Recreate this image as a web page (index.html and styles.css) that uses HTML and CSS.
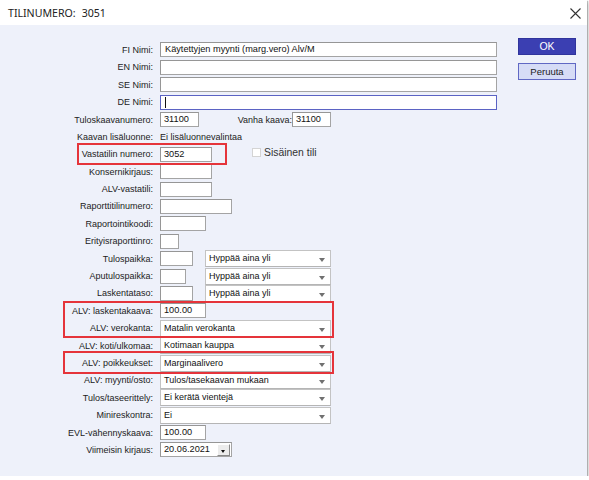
FILE: index.html
```html
<!DOCTYPE html>
<html lang="fi">
<head>
<meta charset="utf-8">
<title>TILINUMERO: 3051</title>
<link rel="stylesheet" href="styles.css">
</head>
<body>
<div class="window">
  <div class="titlebar">
    <div class="title"><span>TILINUMERO:</span><span class="title-num">3051</span></div>
    <svg class="close" width="11" height="11" viewBox="0 0 11 11"><path d="M0.5 0.5 L10.5 10.5 M10.5 0.5 L0.5 10.5" stroke="#333" stroke-width="1.1" fill="none"/></svg>
  </div>
  <div class="content">
    <div class="form">
      <div class="lbl">FI Nimi:</div>
      <div class="ctl"><div class="field full">Käytettyjen myynti (marg.vero) Alv/M</div></div>

      <div class="lbl">EN Nimi:</div>
      <div class="ctl"><div class="field full"></div></div>

      <div class="lbl">SE Nimi:</div>
      <div class="ctl"><div class="field full"></div></div>

      <div class="lbl">DE Nimi:</div>
      <div class="ctl"><div class="field full focus"><span class="caret"></span></div></div>

      <div class="lbl">Tuloskaavanumero:</div>
      <div class="ctl">
        <div class="field w39">31100</div>
        <div class="inline-lbl">Vanha kaava:</div>
        <div class="field w39">31100</div>
      </div>

      <div class="lbl">Kaavan lisäluonne:</div>
      <div class="ctl"><span class="plain">Ei lisäluonnevalintaa</span></div>

      <div class="lbl">Vastatilin numero:</div>
      <div class="ctl">
        <div class="field w52">3052</div>
        <div class="check"><span class="box"></span><span class="check-text">Sisäinen tili</span></div>
      </div>

      <div class="lbl">Konsernikirjaus:</div>
      <div class="ctl"><div class="field w52"></div></div>

      <div class="lbl">ALV-vastatili:</div>
      <div class="ctl"><div class="field w52"></div></div>

      <div class="lbl">Raporttitilinumero:</div>
      <div class="ctl"><div class="field w72"></div></div>

      <div class="lbl">Raportointikoodi:</div>
      <div class="ctl"><div class="field w46"></div></div>

      <div class="lbl">Erityisraporttinro:</div>
      <div class="ctl"><div class="field w19"></div></div>

      <div class="lbl">Tulospaikka:</div>
      <div class="ctl pair">
        <div class="field w33"></div>
        <div class="select">Hyppää aina yli</div>
      </div>

      <div class="lbl">Aputulospaikka:</div>
      <div class="ctl pair">
        <div class="field w26"></div>
        <div class="select">Hyppää aina yli</div>
      </div>

      <div class="lbl">Laskentataso:</div>
      <div class="ctl pair">
        <div class="field w33"></div>
        <div class="select">Hyppää aina yli</div>
      </div>

      <div class="lbl">ALV: laskentakaava:</div>
      <div class="ctl"><div class="field w46">100.00</div></div>

      <div class="lbl">ALV: verokanta:</div>
      <div class="ctl"><div class="select wide">Matalin verokanta</div></div>

      <div class="lbl">ALV: koti/ulkomaa:</div>
      <div class="ctl"><div class="select wide">Kotimaan kauppa</div></div>

      <div class="lbl">ALV: poikkeukset:</div>
      <div class="ctl"><div class="select wide">Marginaalivero</div></div>

      <div class="lbl">ALV: myynti/osto:</div>
      <div class="ctl"><div class="select wide">Tulos/tasekaavan mukaan</div></div>

      <div class="lbl">Tulos/taseerittely:</div>
      <div class="ctl"><div class="select wide">Ei kerätä vientejä</div></div>

      <div class="lbl">Minireskontra:</div>
      <div class="ctl"><div class="select wide">Ei</div></div>

      <div class="lbl">EVL-vähennyskaava:</div>
      <div class="ctl"><div class="field w46">100.00</div></div>

      <div class="lbl">Viimeisin kirjaus:</div>
      <div class="ctl">
        <div class="field date"><span>20.06.2021</span><span class="dd"></span></div>
      </div>
    </div>

    <div class="buttons">
      <div class="btn ok">OK</div>
      <div class="btn cancel">Peruuta</div>
    </div>

    <div class="mark mark-1"></div>
    <div class="mark mark-2"></div>
    <div class="mark mark-3"></div>
  </div>
</div>
</body>
</html>
```

FILE: styles.css
```css
* { box-sizing: border-box; }

html, body {
  margin: 0;
  background: #ffffff;
}

body {
  font-family: "Liberation Sans", Arial, sans-serif;
  color: #222;
}

.window {
  width: 587px;
  height: 476px;
  display: flex;
  flex-direction: column;
  background: #eef1fa;
  box-shadow: 1px 1px 1px rgba(0, 0, 0, 0.22), 2px 2px 4px rgba(0, 0, 0, 0.16);
}

.titlebar {
  height: 25px;
  flex: none;
  background: #ffffff;
  display: flex;
  align-items: center;
  justify-content: space-between;
  padding: 0 6px 0 8px;
}

.title {
  font-family: "Noto Sans", "Open Sans", sans-serif;
  font-size: 10.6px;
  color: #222;
  display: flex;
}

.title-num {
  margin-left: 6px;
}

.close {
  display: block;
  margin-top: 1px;
}

.content {
  flex: 1;
  position: relative;
  display: flex;
  align-items: flex-start;
  padding-top: 12.7px;
}

.form {
  margin-top: 3.6px;
  display: grid;
  grid-template-columns: 153px 337px;
  column-gap: 7px;
  grid-auto-rows: 17.4px;
  align-items: center;
  font-size: 9px;
  color: #222;
}

.lbl {
  text-align: right;
  white-space: nowrap;
  line-height: 12px;
}

.ctl {
  display: flex;
  align-items: center;
  height: 100%;
}

.field {
  height: 15px;
  background: #ffffff;
  border: 1px solid #a4a4a4;
  border-top-color: #969696;
  border-left-color: #969696;
  padding: 0 3px;
  line-height: 13px;
  font-size: 9.2px;
  white-space: nowrap;
  overflow: hidden;
  color: #111;
}

.field.full { width: 337px; padding-left: 4px; }
.field.focus {
  border-color: #5b63c4;
  display: flex;
  align-items: center;
}
.caret {
  width: 1px;
  height: 11px;
  background: #111;
}

.w19 { width: 19px; }
.w26 { width: 26px; }
.w33 { width: 33px; }
.w39 { width: 39px; }
.w46 { width: 46px; }
.w52 { width: 52px; }
.w72 { width: 72px; }

.inline-lbl {
  width: 93px;
  text-align: right;
  white-space: nowrap;
}

.plain {
  white-space: nowrap;
}

.check {
  display: flex;
  align-items: center;
  margin-left: 40px;
  margin-bottom: 4px;
}

.check .box {
  width: 9px;
  height: 9px;
  background: #ffffff;
  border: 1px solid #d4d4d4;
}

.check-text {
  margin-left: 3px;
  font-size: 10.4px;
  color: #333;
}

.pair {
  display: grid;
  grid-template-columns: 45px 126px;
  align-items: center;
}

.select {
  position: relative;
  height: 17px;
  width: 126px;
  background: #ffffff;
  border: 1px solid #c3c3c3;
  border-bottom-color: #b5b5b5;
  padding-left: 3px;
  line-height: 15px;
  font-size: 9px;
  white-space: nowrap;
  color: #111;
}

.select.wide { width: 171px; }

.select::after {
  content: "";
  position: absolute;
  right: 5px;
  top: 7px;
  border-left: 3.5px solid transparent;
  border-right: 3.5px solid transparent;
  border-top: 4px solid #707070;
}

.field.date {
  width: 72px;
  display: flex;
  align-items: center;
  justify-content: space-between;
  padding-right: 1px;
}

.dd {
  position: relative;
  width: 13px;
  height: 12px;
  background: #ececec;
  border: 1px solid;
  border-color: #ffffff #8a8a8a #8a8a8a #ffffff;
}

.dd::after {
  content: "";
  position: absolute;
  left: 3px;
  top: 5px;
  border-left: 2.5px solid transparent;
  border-right: 2.5px solid transparent;
  border-top: 3px solid #111;
}

.buttons {
  margin-left: 21px;
  display: flex;
  flex-direction: column;
  gap: 8px;
}

.btn {
  width: 58px;
  height: 17px;
  display: flex;
  align-items: center;
  justify-content: center;
  font-size: 9.5px;
}

.btn.ok {
  background: #3b3fb2;
  border: 1px solid #30349c;
  color: #ffffff;
  font-size: 10.5px;
}

.btn.cancel {
  background: #d6dcf6;
  border: 1px solid #6068c4;
  color: #222;
}

.mark {
  position: absolute;
  border: 2px solid #e5343a;
  pointer-events: none;
}

.mark-1 { left: 77px; top: 118px; width: 150px; height: 22px; }
.mark-2 { left: 63px; top: 276px; width: 271px; height: 37px; }
.mark-3 { left: 63px; top: 326px; width: 271px; height: 23px; }
```
